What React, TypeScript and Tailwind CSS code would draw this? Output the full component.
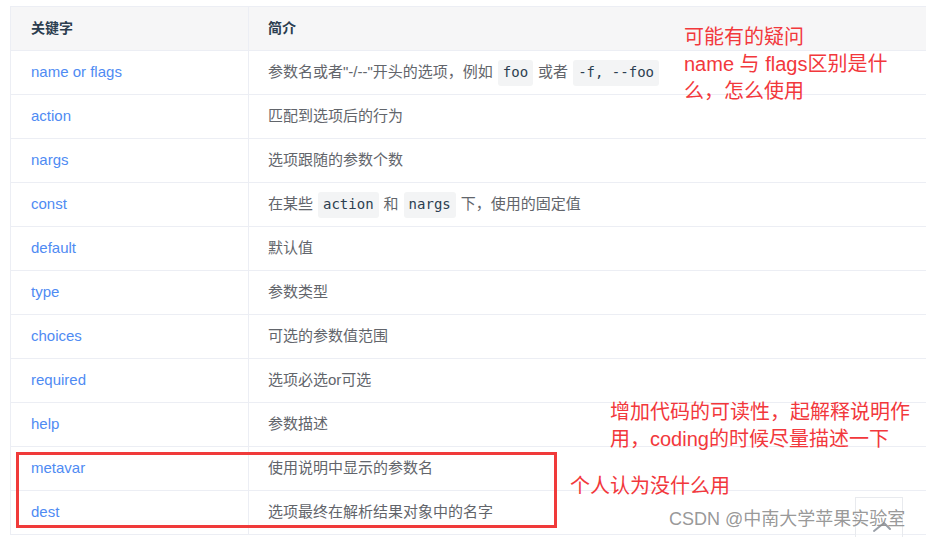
import React from 'react';

type Piece = string | { code: string };

const rows: { key: string; desc: Piece[] }[] = [
  { key: 'name or flags', desc: ['参数名或者"-/--"开头的选项，例如', { code: 'foo' }, '或者', { code: '-f, --foo' }] },
  { key: 'action', desc: ['匹配到选项后的行为'] },
  { key: 'nargs', desc: ['选项跟随的参数个数'] },
  { key: 'const', desc: ['在某些', { code: 'action' }, '和', { code: 'nargs' }, '下，使用的固定值'] },
  { key: 'default', desc: ['默认值'] },
  { key: 'type', desc: ['参数类型'] },
  { key: 'choices', desc: ['可选的参数值范围'] },
  { key: 'required', desc: ['选项必选or可选'] },
  { key: 'help', desc: ['参数描述'] },
  { key: 'metavar', desc: ['使用说明中显示的参数名'] },
  { key: 'dest', desc: ['选项最终在解析结果对象中的名字'] },
];

const sans = 'font-["Liberation_Sans","Noto_Sans_CJK_SC",sans-serif]';

export default function App() {
  return (
    <div className={`relative h-[537px] w-[926px] overflow-hidden bg-white ${sans}`}>
      <div className="ml-[10px] mt-[6px] w-[960px] border-l border-t border-[#eceef4]">
        {/* header */}
        <div className="flex h-[44px] border-b border-[#eceef4] bg-[#f6f6f7] text-[14px] font-bold text-[#2c3e50]">
          <div className="flex w-[238px] items-center border-r border-[#eceef4] pl-[20px]">关键字</div>
          <div className="flex flex-1 items-center pl-[19px]">简介</div>
        </div>

        {rows.map((r) => (
          <div key={r.key} className="flex h-[44px] border-b border-[#eceef4] text-[15px]">
            <div className="flex w-[238px] items-center border-r border-[#eceef4] pl-[20px] text-[#4f8bf3]">
              {r.key}
            </div>
            <div className="flex flex-1 items-center gap-[5px] pl-[19px] text-[#62656b]">
              {r.desc.map((p, i) =>
                typeof p === 'string' ? (
                  <span key={i}>{p}</span>
                ) : (
                  <code
                    key={i}
                    className='flex h-[26px] items-center rounded-[3px] bg-[#f3f4f5] px-[5px] font-["DejaVu_Sans_Mono","Noto_Sans_CJK_SC",monospace] text-[14px] text-[#2c3e50]'
                  >
                    {p.code}
                  </code>
                )
              )}
            </div>
          </div>
        ))}
      </div>

      {/* red highlight box */}
      <div className="absolute left-[16px] top-[452px] h-[76px] w-[541px] border-[3px] border-[#f03a3a]" />

      {/* annotations */}
      <div className="absolute left-[684px] top-[24px] text-[20px] leading-[27px] text-[#f2383c]">
        <div>可能有的疑问</div>
        <div>name 与 flags区别是什</div>
        <div>么，怎么使用</div>
      </div>
      <div className="absolute left-[610px] top-[399px] text-[20px] leading-[27px] text-[#f2383c]">
        <div>增加代码的可读性，起解释说明作</div>
        <div>用，coding的时候尽量描述一下</div>
      </div>
      <div className="absolute left-[570px] top-[473px] text-[20px] leading-[27px] text-[#f2383c]">
        个人认为没什么用
      </div>

      {/* floating button */}
      <div className="absolute left-[855px] top-[497px] h-[44px] w-[48px] border border-[#e8eaee] bg-white/40">
        <svg width="48" height="44" viewBox="0 0 48 44" className="absolute left-0 top-0">
          <path d="M18 33 L28 25 M28 25 L34 31" stroke="#9aa0a8" strokeWidth="2" fill="none" strokeLinecap="round" />
        </svg>
      </div>

      {/* watermark */}
      <div className="absolute left-[669px] top-[507px] text-[18px] leading-[24px] text-[#8c8c8c]/90">
        CSDN @中南大学苹果实验室
      </div>
    </div>
  );
}
